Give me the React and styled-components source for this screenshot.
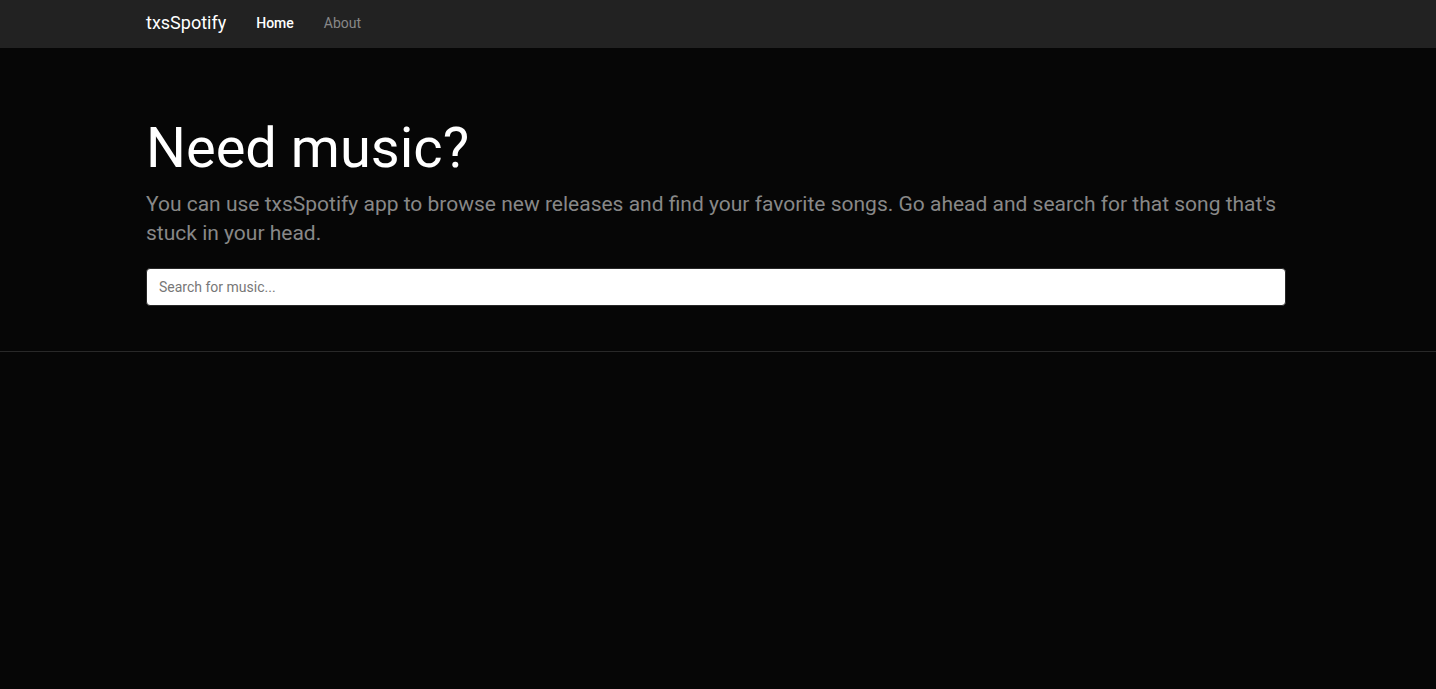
import React from 'react';
import styled, { createGlobalStyle } from 'styled-components';

const GlobalStyle = createGlobalStyle`
    html, body {
        margin: 0;
        padding: 0;
        background-color: #060606;
        font-family: Roboto, "Liberation Sans", Arial, sans-serif;
        color: #888;
    }
    * {
        box-sizing: border-box;
    }
`;

const Page = styled.div`
    min-height: 689px;
    background-color: #060606;
`;

const Container = styled.div`
    width: 1140px;
    margin-left: calc(50% - 572px);
`;

const Navbar = styled.nav`
    height: 48px;
    background-color: #222;
`;

const NavInner = styled(Container)`
    display: flex;
    align-items: center;
    height: 100%;
    padding-bottom: 3px;
`;

const Brand = styled.a`
    font-size: 18px;
    font-weight: 400;
    color: #fff;
    text-decoration: none;
    margin-right: 30px;
`;

const NavLinks = styled.ul`
    display: flex;
    gap: 30px;
    list-style: none;
    margin: 0;
    padding: 0;
`;

const NavLink = styled.a`
    font-size: 14px;
    text-decoration: none;
    color: ${({ active }) => (active ? '#fff' : '#888')};
    font-weight: ${({ active }) => (active ? 500 : 400)};
`;

const Jumbotron = styled.section`
    padding: 70px 0 45px;
    border-bottom: 1px solid #282828;
`;

const Title = styled.h1`
    margin: 0 0 10px;
    font-size: 56px;
    line-height: 1.1;
    font-weight: 400;
    color: #fff;
`;

const Lead = styled.p`
    margin: 0 0 20px;
    font-size: 21px;
    line-height: 29px;
    font-weight: 400;
    color: #888;
`;

const SearchInput = styled.input`
    display: block;
    width: 100%;
    height: 38px;
    padding: 6px 12px;
    font-family: Roboto, "Liberation Sans", Arial, sans-serif;
    font-size: 14px;
    color: #555;
    background-color: #fff;
    border: 1px solid #282828;
    border-radius: 4px;
    outline: none;

    &::placeholder {
        color: #777;
    }
`;

function App() {
    return (
        <Page>
            <GlobalStyle />
            <Navbar>
                <NavInner>
                    <Brand href="#">txsSpotify</Brand>
                    <NavLinks>
                        <li><NavLink href="#" active>Home</NavLink></li>
                        <li><NavLink href="#">About</NavLink></li>
                    </NavLinks>
                </NavInner>
            </Navbar>
            <Jumbotron>
                <Container>
                    <Title>Need music?</Title>
                    <Lead>
                        You can use txsSpotify app to browse new releases and find your favorite songs. Go ahead and search for that song that's stuck in your head.
                    </Lead>
                    <SearchInput type="text" placeholder="Search for music..." />
                </Container>
            </Jumbotron>
        </Page>
    );
}

export default App;
